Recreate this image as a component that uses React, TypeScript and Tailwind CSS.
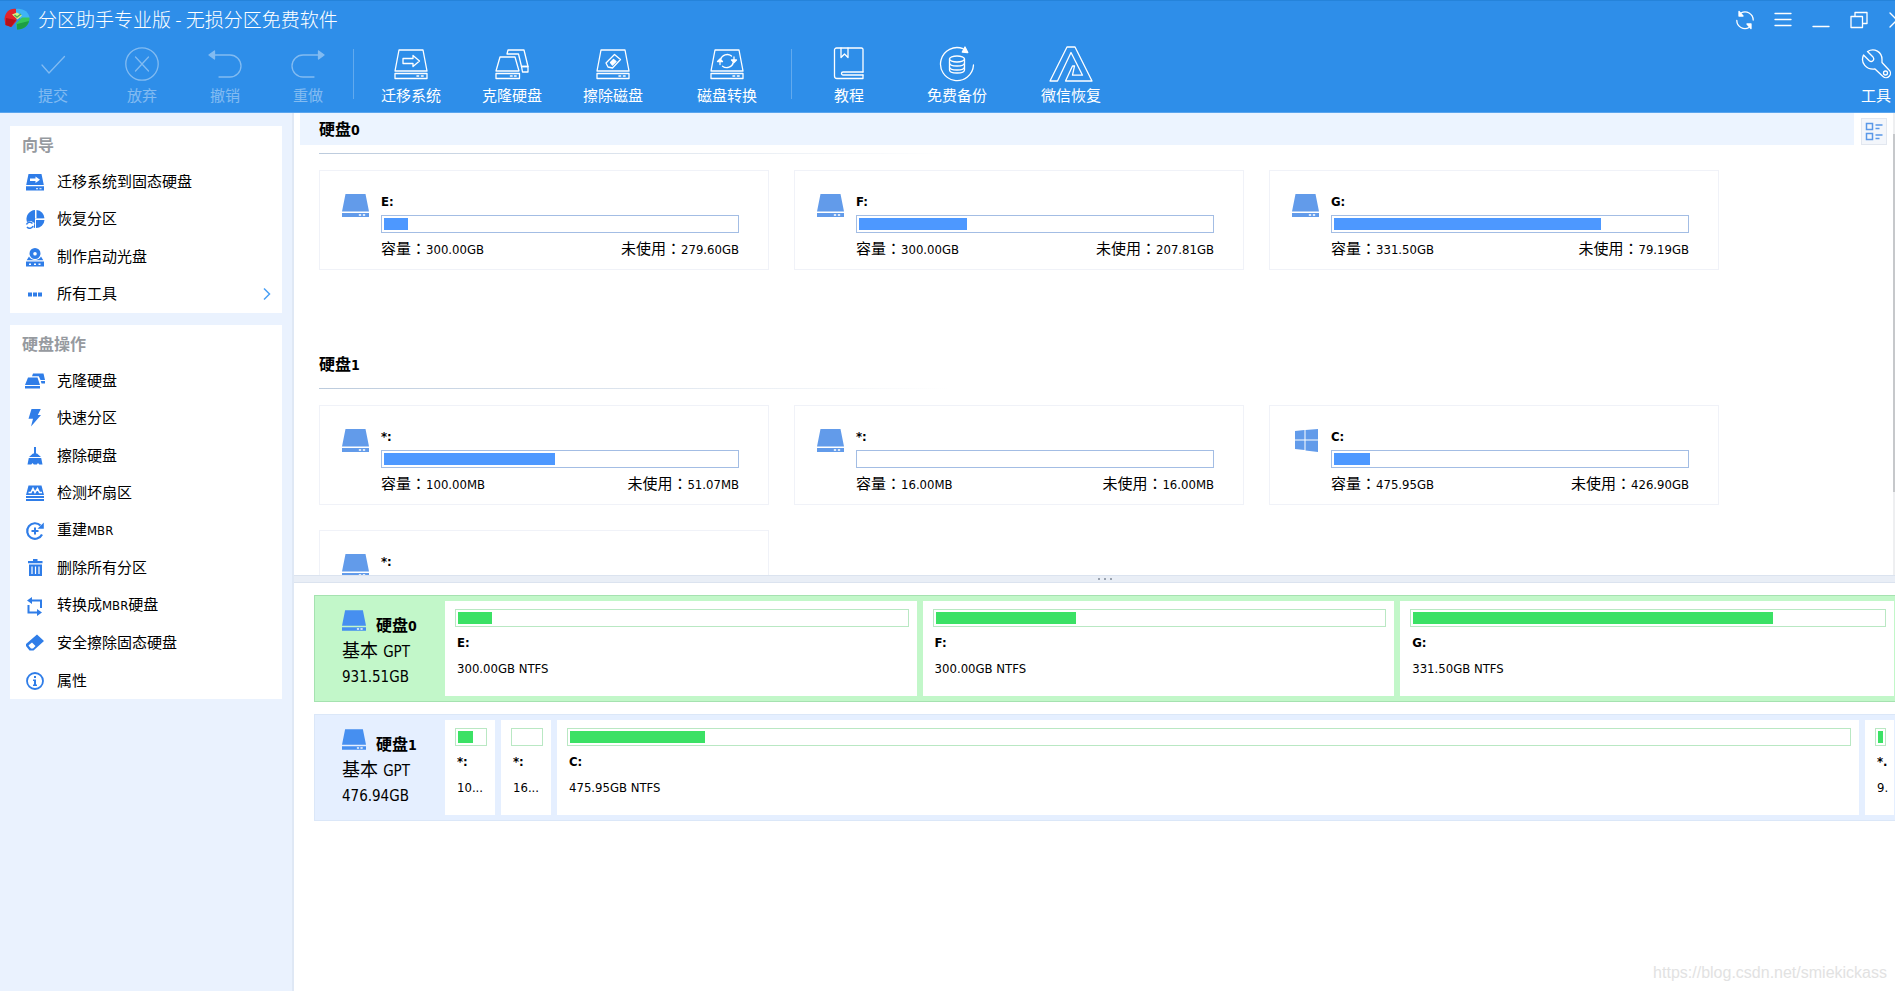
import React from 'react';
import clsx from 'clsx';

type IconProps = { className?: string };

/* ---------- Toolbar icons ---------- */

const strokeProps = {
  fill: 'none',
  stroke: 'currentColor',
  strokeWidth: 1.3,
  strokeLinecap: 'round' as const,
  strokeLinejoin: 'round' as const,
};

const DiskOutline: React.FC<{ children?: React.ReactNode }> = ({ children }) => (
  <svg width="34" height="34" viewBox="0 0 34 34" {...strokeProps}>
    <path d="M5 3h24l4 21H1z" />
    <path d="M1 26.5h32v5H1z" />
    <path d="M23 29h1.6M27.5 29h1.6" strokeWidth="1.6" />
    {children}
  </svg>
);

const CheckIcon = () => (
  <svg width="34" height="34" viewBox="0 0 34 34" {...strokeProps}>
    <path d="M6 18l7 8L28.500 9.500" />
  </svg>
);

const DiscardIcon = () => (
  <svg width="34" height="34" viewBox="0 0 34 34" {...strokeProps}>
    <circle cx="17" cy="17" r="16.2" />
    <path d="M10.500 10l13 14M23.500 10l-13 14" />
  </svg>
);

const UndoIcon = () => (
  <svg width="34" height="34" viewBox="0 0 34 34" {...strokeProps}>
    <path d="M5 8h17a11 11 0 0 1 0 22H11" />
    <path d="M1 8l5.500-4v8z" fill="currentColor" />
  </svg>
);

const RedoIcon = () => (
  <svg width="34" height="34" viewBox="0 0 34 34" {...strokeProps}>
    <path d="M29 8H12a11 11 0 0 0 0 22h11" />
    <path d="M33 8l-5.500-4v8z" fill="currentColor" />
  </svg>
);

const MigrateIcon = () => (
  <DiskOutline>
    <path d="M9 11.500h10v-3l6.500 5.500-6.500 5.500v-3H9z" />
  </DiskOutline>
);

const CloneIcon = () => (
  <svg width="34" height="34" viewBox="0 0 34 34" {...strokeProps}>
    <path d="M5 10h15l4 14H1z" />
    <path d="M1 26.500h23.500v5H1z" />
    <path d="M15.500 29h1.600M19.500 29h1.600" strokeWidth="1.6" />
    <path d="M12 7l1-4h16l4 16.500h-6.500L23.500 7z" />
    <path d="M26.500 19.500H33V25h-5.500z" />
  </svg>
);

const EraseIcon = () => (
  <DiskOutline>
    <path d="M18.500 7.500l6 5-8 8.500-4.500-1-2-4z" />
    <path d="M14.500 15.500l3-3 2.500 2-3.500 3.500z" fill="currentColor" />
  </DiskOutline>
);

const ConvertIcon = () => (
  <DiskOutline>
    <path d="M10.500 12.500a7 7 0 0 1 11-3.500M23.500 15a7 7 0 0 1-11 4.200" />
    <path d="M10 12.500v5M7.500 14.500l2.500-2.500 2.500 2.500z" fill="currentColor" />
    <path d="M24 15v-5M21.500 13l2.500 2.500 2.500-2.500z" fill="currentColor" />
  </DiskOutline>
);

const BookIcon = () => (
  <svg width="34" height="34" viewBox="0 0 34 34" {...strokeProps}>
    <path d="M31 25V2.500A1.500 1.500 0 0 0 29.500 1h-25a2 2 0 0 0-2 2v26A2.500 2.500 0 0 0 5 31.500h26V28" />
    <path d="M31 25H11a1.500 1.500 0 0 0 0 3h20" />
    <path d="M9 1v9.500L12.500 7l3.500 3.500V1" />
  </svg>
);

const BackupIcon = () => (
  <svg width="36" height="36" viewBox="0 0 36 36" {...strokeProps}>
    <path d="M34.500 19A16.500 16.500 0 1 1 24 2.700" />
    <path d="M26 1l2.800 5.500-5.500-.5z" fill="currentColor" />
    <ellipse cx="18" cy="13" rx="7.500" ry="3" />
    <path d="M10.500 13v11c0 1.800 3.400 3 7.500 3s7.500-1.200 7.500-3V13" />
    <path d="M10.500 17c0 1.800 3.400 3 7.500 3s7.500-1.200 7.500-3M10.500 21c0 1.800 3.400 3 7.500 3s7.500-1.200 7.500-3" />
  </svg>
);

const RecoverIcon = () => (
  <svg width="44" height="36" viewBox="0 0 44 36" {...strokeProps}>
    <path d="M18 1L1 35h7.500L22 6.500l11.500 22.700h-10l2-9.200h-2l-7 15H43L26 1z" />
  </svg>
);

const WrenchIcon = () => (
  <svg width="30" height="30" viewBox="0 0 30 30" {...strokeProps}>
    <path d="M2.500 6l5.500 5.500c3 2.500 6-.5 4-3.500l-5.500-5.500c7-4 14.500.5 14.500 8v3l7 7.500a4.200 4.200 0 0 1-6 6.500l-8-7.500C5.500 21-1 14 2.500 6z" />
    <circle cx="24.500" cy="24" r="2" />
  </svg>
);

/* ---------- Window controls ---------- */

const RefreshIcon = () => (
  <svg width="20" height="20" viewBox="0 0 20 20" {...strokeProps}>
    <path d="M6 3a8.200 8.200 0 0 1 12.200 7M14 17.500A8.200 8.200 0 0 1 1.800 10.500" />
    <path d="M4 1.500V6h4zM16 18.500V14h-4z" fill="currentColor" />
  </svg>
);

const MenuIcon = () => (
  <svg width="18" height="18" viewBox="0 0 18 18" {...strokeProps}>
    <path d="M1 2.500h16M1 8.500h16M1 14.500h16" />
  </svg>
);

const MinimizeIcon = () => (
  <svg width="18" height="18" viewBox="0 0 18 18" {...strokeProps}>
    <path d="M1 15.500h16" />
  </svg>
);

const RestoreIcon = () => (
  <svg width="18" height="18" viewBox="0 0 18 18" {...strokeProps}>
    <path d="M1 5.500h11.500v11H1zM5 5V1.500h12v11h-4" />
  </svg>
);

const CloseIcon = () => (
  <svg width="18" height="18" viewBox="0 0 18 18" {...strokeProps}>
    <path d="M2 2l14 14M16 2L2 16" />
  </svg>
);

/* ---------- Drive icons ---------- */

const DriveIcon: React.FC<IconProps> = ({ className }) => (
  <svg className={className} viewBox="0 0 27 23" fill="currentColor">
    <path d="M3.500 0h20L27 17.500H0zM0 19h27v4H0z" />
    <path d="M17 20.500h2v1h-2zM21 20.500h2v1h-2z" fill="#fff" stroke="#fff" strokeWidth=".5" />
  </svg>
);

const WindowsIcon: React.FC<IconProps> = ({ className }) => (
  <svg className={className} viewBox="0 0 27 23" fill="currentColor">
    <path d="M3 2l9.500-1v9.500H3zM13.500 1L26 0v10.500H13.500zM3 11.500h9.500V21L3 20zM13.500 11.500H26V23l-12.500-1.500z" />
  </svg>
);

/* ---------- Sidebar icons ---------- */

const SideSvg: React.FC<{ children: React.ReactNode }> = ({ children }) => (
  <svg width="20" height="20" viewBox="0 0 20 20" fill="currentColor" className="shrink-0">
    {children}
  </svg>
);

const sideIcons = {
  migrate: (
    <SideSvg>
      <path d="M3.500 2h13L18.800 13H1.200zM1 14.200h18v4.300H1z" />
      <path d="M5 6.500h5.500v-2L15 7.800 10.500 11V9H5zM11 16.200h2v1h-2zM14.500 16.200h2v1h-2z" fill="#fff" />
    </SideSvg>
  ),
  recover: (
    <SideSvg>
      <path d="M10 1v8.500h8.500v1.500H10v8a9 9 0 0 1-1.500-.5L9.500 14 6 12 2 13A9 9 0 0 1 10 1z" />
      <path d="M11.500 1a8.500 8.500 0 0 1 8 8.500h-8zM11 11h8.500a8.500 8.500 0 0 1-8.500 8z" />
      <path d="M10 9.500h10v1.500H10z" fill="#fff" />
      <path d="M1.500 15.500a3.500 3.500 0 0 1 6-1M8 17a3.500 3.500 0 0 1-6 1" fill="none" stroke="currentColor" strokeWidth="1.5" />
    </SideSvg>
  ),
  bootDisc: (
    <SideSvg>
      <path fillRule="evenodd" d="M10 1a5.500 5.500 0 0 1 5.500 5.500A5.500 5.500 0 0 1 10 12a5.500 5.500 0 0 1-5.500-5.500A5.500 5.500 0 0 1 10 1zm0 4a1.800 1.800 0 1 0 0 3.600A1.800 1.800 0 0 0 10 5z" />
      <path d="M4 9.500c2 4.500 10 4.500 12 0l2.300 3.700H1.700zM1 14.500h18v5H1z" />
      <path d="M4 16.500h2V18H4zM9 16.500h2V18H9zM13.500 16.500h2V18h-2z" fill="#fff" />
    </SideSvg>
  ),
  more: (
    <SideSvg>
      <path d="M3 8.500h4v4H3zM8 8.500h4v4H8zM13 8.500h4v4h-4z" />
    </SideSvg>
  ),
  clone: (
    <SideSvg>
      <path d="M8 2.500h10.500L20 9h-4.500l-1.700-3.700H7zM15.800 10H20v2.500h-3.500zM3 6.500h9.500L15 14H0zM0 15h15v2.500H0z" />
    </SideSvg>
  ),
  bolt: (
    <SideSvg>
      <path d="M6.500 1h9.300l-3 6H16L6 18.500l2-7.700H3.500z" />
    </SideSvg>
  ),
  broom: (
    <SideSvg>
      <path d="M9 1h2v7H9zM8 7.500h4l4 3.500H4zM3.800 12h12.400l1.300 6.500h-3.200L13 17l-1.200 1.500h-3L7.500 17l-1.200 1.500H2.500z" />
    </SideSvg>
  ),
  sector: (
    <SideSvg>
      <path d="M3.500 2.500h13L19 12H1zM1 13h18v2H1zM1 16h18v2H1z" />
      <path d="M3.500 9.500H6l2-4 2 4 2.500-4 2 4H17" fill="none" stroke="#fff" strokeWidth="1.5" />
    </SideSvg>
  ),
  rebuild: (
    <SideSvg>
      <path d="M15.500 4.500a7.800 7.800 0 1 0 1.500 9" fill="none" stroke="currentColor" strokeWidth="2.2" />
      <path d="M18.800 1.500v6.300h-6.300zM9 6.500h2V9h2.500v2H11v2.500H9V11H6.500V9H9z" />
    </SideSvg>
  ),
  trash: (
    <SideSvg>
      <path d="M8 1h4.500v2h5v2.200H3V3h5z" />
      <path d="M4 6.500h13V18H4z" />
      <path d="M7 8.500V16M10.500 8.500V16M14 8.500V16" stroke="#fff" strokeWidth="1.2" />
    </SideSvg>
  ),
  convert: (
    <SideSvg>
      <path d="M3.500 9v7.500H13M6 4.500h10V12" fill="none" stroke="currentColor" strokeWidth="2" />
      <path d="M2 4.500L7 1v7zM17 16.500L12 13v7z" />
    </SideSvg>
  ),
  eraser: (
    <SideSvg>
      <path fillRule="evenodd" d="M12 1.500L19 8 8.500 17.500h-4L1 13v-2zM4.500 11.500l-1 1 2.500 3h2l2.500-2.500L7 9.500z" />
    </SideSvg>
  ),
  info: (
    <SideSvg>
      <circle cx="10" cy="10" r="8" fill="none" stroke="currentColor" strokeWidth="1.8" />
      <path d="M9 5h2v2H9zM8 8.500h3v5h1V15H8v-1.500h1V10H8z" />
    </SideSvg>
  ),
};

/* ---------- Shared bits ---------- */

// Latin runs are set a little smaller than the Chinese around them
const Mixed: React.FC<{ text: string; latin?: string }> = ({ text, latin = 'text-[13px]' }) => (
  <>
    {text.split(/([\x21-\x7e]+)/).map((part, i) =>
      i % 2 ? (
        <span key={i} className={latin}>{part}</span>
      ) : (
        part
      )
    )}
  </>
);

const UsageBar: React.FC<{ percent: number; label: string; tone: 'blue' | 'green' }> = ({ percent, label, tone }) => (
  <div
    role="progressbar"
    aria-label={label}
    aria-valuenow={percent}
    className={clsx('h-[18px] border bg-white p-0.5', tone === 'blue' ? 'border-[#a3bde4]' : 'border-[#b9e8c3]')}
  >
    <div
      className={clsx('h-full', tone === 'blue' ? 'bg-[#4d98ff]' : 'bg-[#3be165]')}
      style={{ width: `${percent}%` }}
    />
  </div>
);

/* ---------- Data ---------- */

interface ToolItem {
  label: string;
  icon: React.ReactNode;
  className?: string;
  disabled?: boolean;
}

const editTools: ToolItem[] = [
  { label: '提交', icon: <CheckIcon />, className: 'ml-[23px]', disabled: true },
  { label: '放弃', icon: <DiscardIcon />, className: 'ml-[29px]', disabled: true },
  { label: '撤销', icon: <UndoIcon />, className: 'ml-[23px]', disabled: true },
  { label: '重做', icon: <RedoIcon />, className: 'ml-[23px]', disabled: true },
];

const diskTools: ToolItem[] = [
  { label: '迁移系统', icon: <MigrateIcon />, className: 'ml-[27px]' },
  { label: '克隆硬盘', icon: <CloneIcon />, className: 'ml-[41px]' },
  { label: '擦除磁盘', icon: <EraseIcon />, className: 'ml-[41px]' },
  { label: '磁盘转换', icon: <ConvertIcon />, className: 'ml-[54px]' },
];

const extraTools: ToolItem[] = [
  { label: '教程', icon: <BookIcon />, className: 'ml-[27px]' },
  { label: '免费备份', icon: <BackupIcon />, className: 'ml-12' },
  { label: '微信恢复', icon: <RecoverIcon />, className: 'ml-[54px]' },
];

const windowControls = [
  { label: '刷新', icon: <RefreshIcon /> },
  { label: '菜单', icon: <MenuIcon /> },
  { label: '最小化', icon: <MinimizeIcon /> },
  { label: '还原', icon: <RestoreIcon /> },
  { label: '关闭', icon: <CloseIcon /> },
];

const sideGroups = [
  {
    title: '向导',
    items: [
      { label: '迁移系统到固态硬盘', icon: sideIcons.migrate },
      { label: '恢复分区', icon: sideIcons.recover },
      { label: '制作启动光盘', icon: sideIcons.bootDisc },
      { label: '所有工具', icon: sideIcons.more, more: true },
    ],
  },
  {
    title: '硬盘操作',
    items: [
      { label: '克隆硬盘', icon: sideIcons.clone },
      { label: '快速分区', icon: sideIcons.bolt },
      { label: '擦除硬盘', icon: sideIcons.broom },
      { label: '检测坏扇区', icon: sideIcons.sector },
      { label: '重建MBR', icon: sideIcons.rebuild },
      { label: '删除所有分区', icon: sideIcons.trash },
      { label: '转换成MBR硬盘', icon: sideIcons.convert },
      { label: '安全擦除固态硬盘', icon: sideIcons.eraser },
      { label: '属性', icon: sideIcons.info },
    ],
  },
];

interface Partition {
  name: string;
  size?: string;
  free?: string;
  used: number;
  system?: boolean;
}

const disks: { name: string; partitions: Partition[] }[] = [
  {
    name: '硬盘0',
    partitions: [
      { name: 'E:', size: '300.00GB', free: '279.60GB', used: 6.8 },
      { name: 'F:', size: '300.00GB', free: '207.81GB', used: 30.7 },
      { name: 'G:', size: '331.50GB', free: '79.19GB', used: 75.8 },
    ],
  },
  {
    name: '硬盘1',
    partitions: [
      { name: '*:', size: '100.00MB', free: '51.07MB', used: 48.6 },
      { name: '*:', size: '16.00MB', free: '16.00MB', used: 0 },
      { name: 'C:', size: '475.95GB', free: '426.90GB', used: 10.3, system: true },
      { name: '*:', used: 80 },
    ],
  },
];

const diskMaps = [
  {
    name: '硬盘0',
    size: '931.51GB',
    active: true,
    cells: [
      { name: 'E:', info: '300.00GB NTFS', used: 7.5, width: 'flex-[471]' },
      { name: 'F:', info: '300.00GB NTFS', used: 31.3, width: 'flex-[471]' },
      { name: 'G:', info: '331.50GB NTFS', used: 76.6, width: 'flex-[494]' },
    ],
  },
  {
    name: '硬盘1',
    size: '476.94GB',
    active: false,
    cells: [
      { name: '*:', info: '10...', used: 56, width: 'w-[50px]' },
      { name: '*:', info: '16...', used: 0, width: 'w-[50px]' },
      { name: 'C:', info: '475.95GB NTFS', used: 10.6, width: 'flex-1' },
      { name: '*.', info: '9.', used: 90, width: 'w-[29px]' },
    ],
  },
];

/* ---------- Sections ---------- */

const ToolButton: React.FC<ToolItem> = ({ label, icon, className, disabled }) => (
  <button
    disabled={disabled}
    className={clsx('flex w-[60px] shrink-0 flex-col items-center gap-[5px]', disabled && 'opacity-40', className)}
  >
    <span className="flex h-[34px] items-center">{icon}</span>
    <span className="text-[15px] leading-5 whitespace-nowrap">{label}</span>
  </button>
);

const Divider: React.FC<IconProps> = ({ className }) => (
  <div className={clsx('mt-0.5 h-[50px] w-px shrink-0 bg-white/25', className)} />
);

const Header = () => (
  <header className="shrink-0 overflow-hidden border-t border-b border-t-[#2583da] border-b-[#5aa5ee] bg-[#2e8ee9] text-white">
    <div className="flex h-[35px] items-center justify-between pl-1">
      <h1 className="flex items-center gap-2 font-['Noto_Sans_CJK_SC',sans-serif] text-[19px] leading-7 font-light">
        <svg width="26" height="22" viewBox="0 0 26 22">
          <path d="M12 1C6 0 1 4 .500 11l1 6 6 2 5-6z" fill="#e3242b" />
          <path d="M2 10l10 2-5 7-5.500-2z" fill="#b5121b" />
          <path d="M12 1c7-1 13 3 13.500 9l-8 1.500L12 6z" fill="#3fb4f5" />
          <path d="M25.500 9.500c.500 7-5 12-12.500 12l-1-6 6-6z" fill="#35c75a" />
          <path d="M13 16l12-3c-1 5-6 9-12 8.500z" fill="#1d9e43" />
          <path d="M8 6.500l5-2 5 3-4.500 4z" fill="#d8f08a" />
          <path d="M10.500 7l2.500 2 4-3" fill="none" stroke="#4caf50" strokeWidth="1.5" />
        </svg>
        <span>分区助手专业版 - 无损分区免费软件</span>
      </h1>
      <div className="-mr-[21px] flex">
        {windowControls.map((control) => (
          <button key={control.label} aria-label={control.label} className="flex h-9 w-[38px] items-center justify-center pt-0.5">
            {control.icon}
          </button>
        ))}
      </div>
    </div>

    <div className="flex h-[76px] items-start pt-[11px] pr-1">
      {editTools.map((tool) => <ToolButton key={tool.label} {...tool} />)}
      <Divider className="ml-[15px]" />
      {diskTools.map((tool) => <ToolButton key={tool.label} {...tool} />)}
      <Divider className="ml-[34px]" />
      {extraTools.map((tool) => <ToolButton key={tool.label} {...tool} />)}
      <button className="ml-auto flex flex-col items-center gap-[5px]">
        <span className="flex h-[34px] items-center"><WrenchIcon /></span>
        <span className="text-[15px] leading-5">工具</span>
      </button>
    </div>
  </header>
);

const Sidebar = () => (
  <aside className="flex w-[294px] shrink-0 flex-col gap-3 border-r-2 border-[#dfe8f5] bg-[#eaf2fe] px-2.5 pt-[13px]">
    {sideGroups.map((group) => (
      <nav key={group.title} className="bg-white">
        <h2 className="flex h-[37px] items-center pt-0.5 pl-3 text-base font-bold text-[#969a9f]">{group.title}</h2>
        <ul>
          {group.items.map((item) => (
            <li key={item.label} className="h-[37px] even:h-[38px]">
              <button className="flex h-full w-full items-center pr-[11px] pl-[15px] text-[15px] leading-5 text-[#2f7de8]">
                {item.icon}
                <span className="ml-3 text-black"><Mixed text={item.label} /></span>
                {'more' in item && (
                  <svg width="8" height="14" viewBox="0 0 8 14" className="ml-auto" fill="none" stroke="#4aa0f5" strokeWidth="1.5">
                    <path d="M1 1.500L6.500 7 1 12.500" />
                  </svg>
                )}
              </button>
            </li>
          ))}
        </ul>
      </nav>
    ))}
  </aside>
);

const PartitionCard: React.FC<{ partition: Partition }> = ({ partition }) => {
  const Icon = partition.system ? WindowsIcon : DriveIcon;

  return (
    <article className="flex h-[100px] w-[450px] shrink-0 gap-3 border border-[#f0f2f8] pt-[21px] pr-[29px] pl-[22px]">
      <Icon className="mt-0.5 h-[23px] w-[27px] shrink-0 text-[#629bea]" />
      <div className="flex-1">
        <h3 className="mb-[3px] text-[13px] leading-5 font-bold">{partition.name}</h3>
        <UsageBar percent={partition.used} label={partition.name} tone="blue" />
        {partition.size && (
          <div className="mt-[5px] flex justify-between text-[15px] leading-5">
            <span>容量<span className="font-['Noto_Sans_CJK_TC']">：</span><Mixed text={partition.size} /></span>
            <span>未使用<span className="font-['Noto_Sans_CJK_TC']">：</span><Mixed text={partition.free ?? ''} /></span>
          </div>
        )}
      </div>
    </article>
  );
};

const PartitionPane = () => (
  <section className="relative h-[462px] shrink-0 overflow-hidden">
    {disks.map((disk, i) => (
      <div key={disk.name} className="min-h-[235px]">
        <div className="flex gap-[7px] pr-2 pl-1.5">
          <h2 className={clsx('flex h-8 flex-1 items-center pt-0.5 pl-[19px] text-base font-bold', i === 0 && 'bg-[#ecf4ff]')}>
            <span><Mixed text={disk.name} latin="text-sm" /></span>
          </h2>
          {i === 0 && (
            <button aria-label="视图" className="mt-[5px] flex h-[27px] w-[26px] items-center justify-center border border-[#e2e7ef] bg-[#f3f6fb] text-[#5a98e8]">
              <svg width="18" height="19" viewBox="0 0 18 19" fill="none" stroke="currentColor" strokeWidth="1.5">
                <path d="M1.500 1.500h6v6h-6zM1.500 11.500h6v6h-6zM10.500 3h7M10.500 6.500h4M10.500 13h7M10.500 16.500h4" />
              </svg>
            </button>
          )}
        </div>
        <div className="mt-2 ml-[25px] h-px bg-linear-to-r from-[#bccbdd] to-transparent to-40%" />
        <div className="mt-4 ml-[25px] flex flex-wrap gap-[25px]">
          {disk.partitions.map((partition, j) => <PartitionCard key={j} partition={partition} />)}
        </div>
      </div>
    ))}
    {/* Scrollbar */}
    <div className="absolute top-0 right-0 h-full w-0.5 bg-[#eeeff1] pt-[21px]">
      <div className="h-[358px] bg-[#c6c8cb]" />
    </div>
  </section>
);

const DiskMap: React.FC<{ disk: (typeof diskMaps)[number] }> = ({ disk }) => (
  <article
    className={clsx(
      'flex h-[107px] gap-1.5 border-y border-l py-[5px] pr-px',
      disk.active ? 'border-[#a5e2b0] bg-[#c2f7c9]' : 'border-[#dbe7f8] bg-[#e5efff]'
    )}
  >
    <div className="-mr-1.5 w-[130px] shrink-0 pt-[9px] pl-[27px]">
      <div className="flex gap-2.5">
        <DriveIcon className="h-[21px] w-6 shrink-0 text-[#468ff0]" />
        <h3 className="mt-[6px] text-base leading-5 font-bold"><Mixed text={disk.name} latin="text-sm" /></h3>
      </div>
      <p className="mt-0.5 text-lg leading-[26px]"><Mixed text="基本 GPT" latin="text-[15px]" /></p>
      <p className="text-[15px] leading-6">{disk.size}</p>
    </div>
    {disk.cells.map((cell, i) => (
      <div key={i} className={clsx('min-w-0 shrink-0 bg-white pt-2 pr-2 pl-2.5', cell.width)}>
        <UsageBar percent={cell.used} label={cell.name} tone="green" />
        <div className="mt-[6px] flex flex-col gap-1.5 pl-0.5 text-[13px] leading-5 whitespace-nowrap">
          <span className="font-bold">{cell.name}</span>
          <span>{cell.info}</span>
        </div>
      </div>
    ))}
  </article>
);

export const App = () => (
  <div className="flex h-screen flex-col overflow-hidden bg-white font-['DejaVu_Sans_Condensed','Noto_Sans_CJK_SC',sans-serif] text-black">
    <Header />
    <div className="flex min-h-0 flex-1">
      <Sidebar />
      <main className="flex min-w-0 flex-1 flex-col">
        <PartitionPane />
        <div className="flex h-2 shrink-0 items-center justify-center gap-1 border-y border-[#dbe3ef] bg-[#e9eef6] pl-5">
          {[0, 1, 2].map((dot) => <span key={dot} className="size-0.5 bg-[#9aa3b0]" />)}
        </div>
        <section className="flex flex-1 flex-col gap-3 pt-3 pl-5">
          {diskMaps.map((disk) => <DiskMap key={disk.name} disk={disk} />)}
          <p className="mt-auto pr-2 pb-2 text-right font-['Liberation_Sans',sans-serif] text-base leading-5 text-[#e2e2e2]">
            https://blog.csdn.net/smiekickass
          </p>
        </section>
      </main>
    </div>
  </div>
);

export default App;
